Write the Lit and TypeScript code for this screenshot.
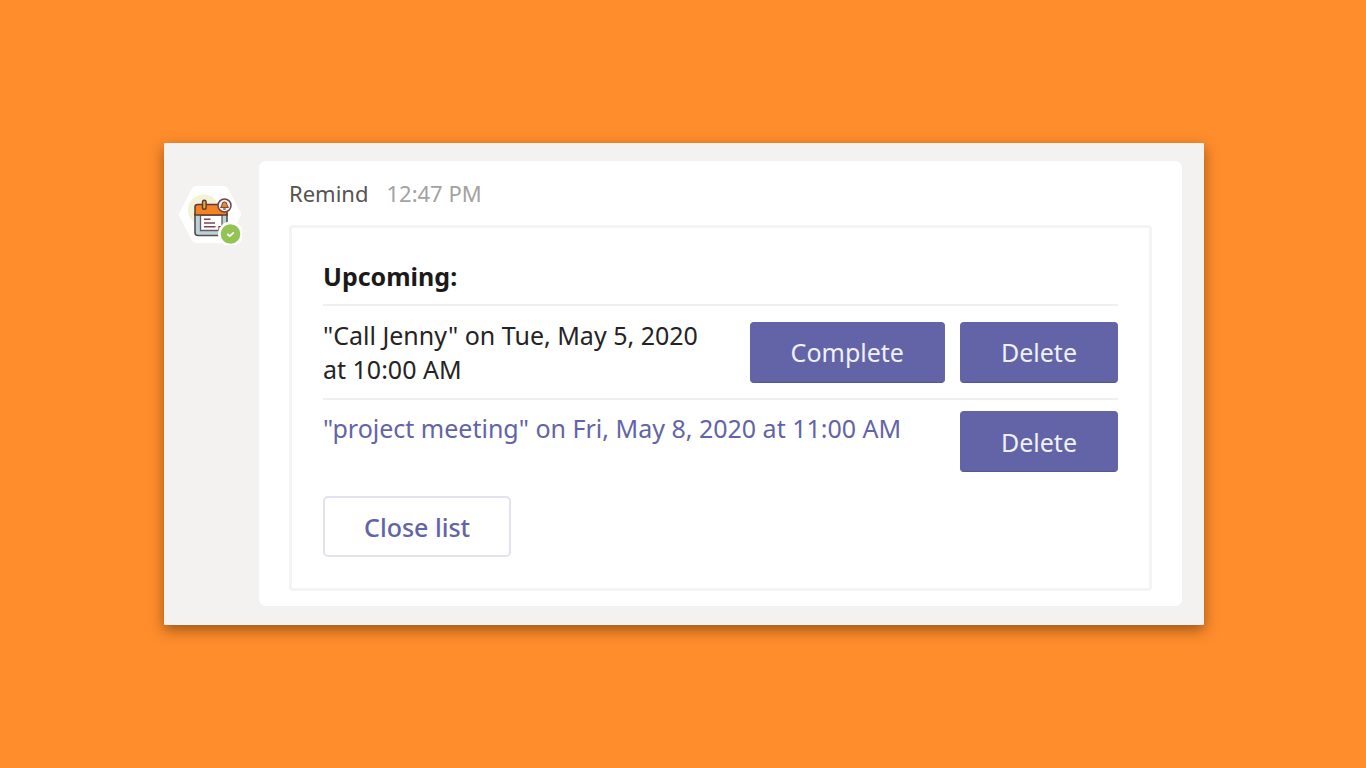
import { LitElement, html, css, nothing } from "lit";
import { customElement, property, state } from "lit/decorators.js";

interface Reminder {
  text: string;
  due: boolean;
}

@customElement("bot-avatar")
class BotAvatar extends LitElement {
  static styles = css`
    :host {
      display: block;
      flex: none;
      width: 64px;
    }
    .icon {
      display: block;
      width: 64px;
      height: 60px;
    }
  `;

  render() {
    return html`
      <svg class="icon" viewBox="0 0 64 60" role="img" aria-label="Remind, available">
        <path
          d="M18.500 1h27q3 0 4.500 2.500l12.500 24q1.200 2 0 4l-12.500 24q-1.500 2.500-4.500 2.500h-27q-3 0-4.500-2.500l-12.500-24q-1.200-2 0-4l12.500-24Q15.500 1 18.500 1z"
          fill="#fff"
        />
        <circle cx="25.500" cy="25" r="15.500" fill="#f3f2d6" />
        <path d="M17 29h32v18.500a3 3 0 0 1-3 3H20a3 3 0 0 1-3-3z" fill="#b9d3d8" stroke="#5a4b50" stroke-width="1.600" />
        <path d="M22.500 30h21.500v15.500H22.500z" fill="#fff" stroke="#6b5b60" stroke-width="1.300" />
        <path d="M17 30V22a2.500 2.500 0 0 1 2.500-2.500h27a2.500 2.500 0 0 1 2.500 2.500V30z" fill="#f58220" stroke="#5a3a36" stroke-width="1.500" />
        <path d="M26 34.300h6.500M26 38h11M26 41.700h11.500" stroke="#7b4556" stroke-width="1.500" />
        <path d="M41 45.500v-4h3.500" fill="none" stroke="#6b3546" stroke-width="1.200" />
        <rect x="24.500" y="15.200" width="3.600" height="9" rx="1.800" fill="#f0a63c" stroke="#5a3a36" stroke-width="1.400" />
        <circle cx="46.500" cy="20.500" r="6.500" fill="#fdf1ea" stroke="#6b4752" stroke-width="1.500" />
        <path d="M42.400 22.400q1.600-1 1.700-3a2.400 2.400 0 0 1 4.800 0q.1 2 1.700 3z" fill="#f08a2c" stroke="#6b3f3a" stroke-width="1" />
        <path d="M45.200 24h2.600" stroke="#5b3742" stroke-width="1.200" />
        <circle cx="52.500" cy="49" r="12.500" fill="#fff" />
        <circle cx="52.500" cy="49" r="9.800" fill="#92c353" />
        <path d="M49.300 49l2.500 2.200 4-3.800" fill="none" stroke="#fff" stroke-width="1.700" />
      </svg>
    `;
  }
}

@customElement("reminder-row")
class ReminderRow extends LitElement {
  @property({ attribute: false }) reminder!: Reminder;

  static styles = css`
    :host {
      display: block;
    }
    .row {
      display: flex;
      align-items: center;
      gap: 15px;
      padding: 12px 0;
      border-top: 2px solid #f0f0f0;
    }
    .row.later {
      align-items: flex-start;
      padding: 11px 0 0;
    }
    .text {
      flex: 1;
      margin: 0 24px 0 0;
      color: #252423;
      font-size: 25px;
      line-height: 34px;
    }
    .later .text {
      color: #6264a7;
      margin-right: 0;
    }
    button {
      box-sizing: border-box;
      height: 61px;
      padding: 0 40px;
      border: 1px solid #6264a7;
      border-bottom-color: #55578f;
      border-radius: 4px;
      background: #6264a7;
      color: #f0f0fa;
      font: inherit;
      font-size: 25px;
      line-height: 34px;
      cursor: pointer;
    }
  `;

  private act(kind: string) {
    this.dispatchEvent(new CustomEvent("reminder-" + kind, { detail: this.reminder }));
  }

  render() {
    const { text, due } = this.reminder;
    return html`
      <div class="row ${due ? "due" : "later"}">
        <p class="text">${text}</p>
        ${due ? html`<button type="button" @click=${() => this.act("complete")}>Complete</button>` : nothing}
        <button type="button" @click=${() => this.act("delete")}>Delete</button>
      </div>
    `;
  }
}

@customElement("app-root")
class AppRoot extends LitElement {
  @state() private reminders: Reminder[] = [
    { text: '"Call Jenny" on Tue, May 5, 2020 at 10:00 AM', due: true },
    { text: '"project meeting" on Fri, May 8, 2020 at 11:00 AM', due: false },
  ];
  @state() private open = true;

  static styles = css`
    :host {
      display: flex;
      align-items: center;
      justify-content: center;
      box-sizing: border-box;
      min-height: 100vh;
      padding: 24px 24px 24px 26px;
      background: #ff8d2c;
      font-family: "Noto Sans", "Open Sans", sans-serif;
    }
    .frame {
      display: flex;
      align-items: flex-start;
      gap: 17px;
      box-sizing: border-box;
      width: 100%;
      max-width: 1040px;
      padding: 18px 22px 19px 14px;
      border-radius: 1px;
      background: #f3f2f1;
      box-shadow: 0 5px 14px rgba(60, 30, 0, 0.5);
    }
    bot-avatar {
      margin-top: 24px;
    }
    .message {
      flex: 1;
      min-width: 0;
      padding: 16px 30px 15px;
      border-radius: 7px;
      background: #fff;
    }
    header {
      display: flex;
      gap: 18px;
      margin-bottom: 16px;
      font-size: 22px;
      line-height: 32px;
      color: #555453;
    }
    time {
      color: #a3a2a1;
    }
    .card {
      padding: 31px;
      border: 3px solid #f4f4f4;
      border-radius: 4px;
    }
    h1 {
      margin: 0;
      padding-bottom: 11px;
      color: #1b1a19;
      font-size: 25px;
      font-weight: 700;
      line-height: 34px;
    }
    .close {
      box-sizing: border-box;
      height: 61px;
      margin-top: 24px;
      padding: 0 39px;
      border: 2px solid #e2e2f0;
      border-radius: 5px;
      background: #fff;
      color: #6264a7;
      font: inherit;
      font-size: 25px;
      font-weight: 500;
      line-height: 34px;
      cursor: pointer;
    }
  `;

  private remove(e: CustomEvent<Reminder>) {
    this.reminders = this.reminders.filter((r) => r !== e.detail);
  }

  render() {
    return html`
      <main class="frame">
        <bot-avatar></bot-avatar>
        <article class="message">
          <header><span>Remind</span><time datetime="12:47">12:47 PM</time></header>
          ${this.open
            ? html`<section class="card">
                <h1>Upcoming:</h1>
                ${this.reminders.map(
                  (r) => html`<reminder-row
                    .reminder=${r}
                    @reminder-complete=${this.remove}
                    @reminder-delete=${this.remove}
                  ></reminder-row>`
                )}
                <button class="close" type="button" @click=${() => (this.open = false)}>Close list</button>
              </section>`
            : nothing}
        </article>
      </main>
    `;
  }
}
